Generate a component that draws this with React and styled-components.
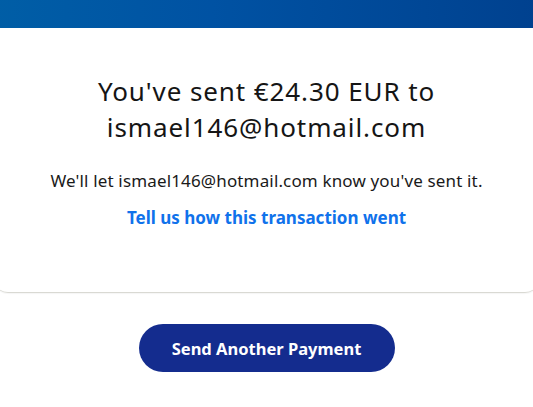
import React from 'react';
import styled, { createGlobalStyle } from 'styled-components';

const GlobalStyle = createGlobalStyle`
  html, body {
    margin: 0;
    padding: 0;
    background: #ffffff;
    overflow: hidden;
  }
  body {
    font-family: "Noto Sans", "Liberation Sans", sans-serif;
    color: #1a1a1a;
  }
`;

const Page = styled.div`
  width: 100%;
  min-height: 100vh;
  display: flex;
  flex-direction: column;
  align-items: center;
`;

const Card = styled.section`
  align-self: stretch;
  margin: 0 -6px;
  border-radius: 0 0 14px 14px;
  border-bottom: 1px solid #d9d9d3;
  box-shadow: 0 1px 1px rgba(0, 0, 0, 0.04);
  overflow: hidden;
  background: #ffffff;
`;

const Header = styled.div`
  height: 28px;
  background: linear-gradient(90deg, #005ea6 0%, #0052a3 40%, #00418f 100%);
`;

const Body = styled.div`
  display: flex;
  flex-direction: column;
  align-items: center;
  text-align: center;
  padding: 45px 20px 63px;
`;

const Title = styled.h1`
  margin: 0;
  font-size: 26px;
  font-weight: 400;
  line-height: 36px;
  letter-spacing: 0.9px;
  color: #151515;
`;

const Note = styled.p`
  margin: 25px 0 0;
  font-size: 17px;
  line-height: 22px;
  letter-spacing: 0.15px;
  color: #1a1a1a;
`;

const FeedbackLink = styled.a`
  margin-top: 15px;
  font-size: 17px;
  font-weight: 700;
  line-height: 22px;
  color: #1072eb;
  text-decoration: none;
  cursor: pointer;
`;

const PrimaryButton = styled.button`
  margin-top: 31px;
  width: 256px;
  height: 48px;
  padding: 0;
  border: none;
  border-radius: 24px;
  background: #142c8e;
  color: #ffffff;
  font-family: inherit;
  font-size: 16.5px;
  font-weight: 700;
  cursor: pointer;
`;

const App = () => (
  <>
    <GlobalStyle />
    <Page>
      <Card>
        <Header />
        <Body>
          <Title>
            You've sent €24.30 EUR to
            <br />
            ismael146@hotmail.com
          </Title>
          <Note>We'll let ismael146@hotmail.com know you've sent it.</Note>
          <FeedbackLink>Tell us how this transaction went</FeedbackLink>
        </Body>
      </Card>
      <PrimaryButton>Send Another Payment</PrimaryButton>
    </Page>
  </>
);

export default App;
